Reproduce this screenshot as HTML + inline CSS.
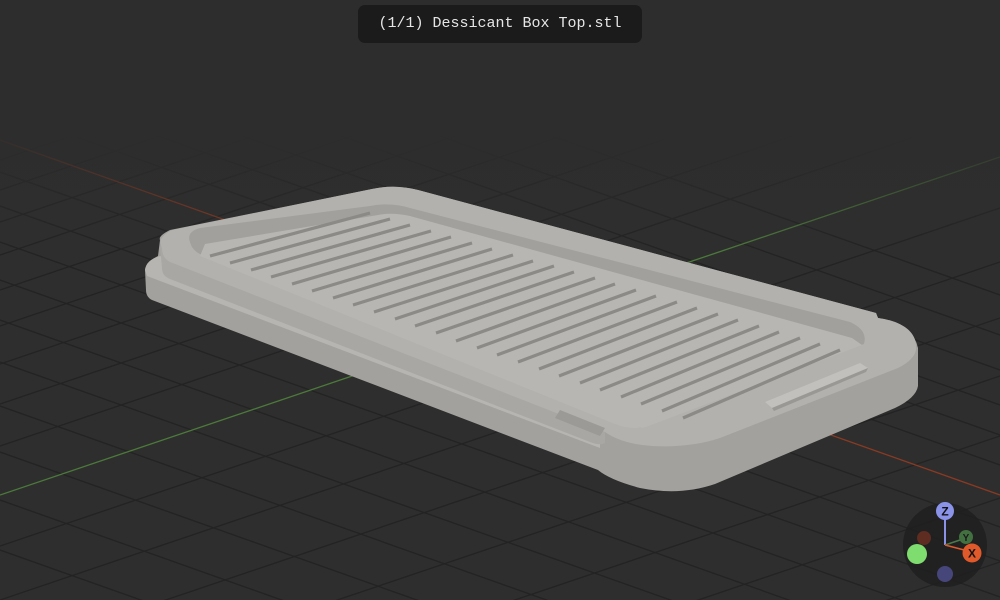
<!DOCTYPE html>
<html><head><meta charset="utf-8"><style>
html,body{margin:0;padding:0;width:1000px;height:600px;overflow:hidden;background:#2d2d2d}
.t{position:absolute;left:358px;top:5px;width:284px;height:38px;background:#1b1b1b;border-radius:7px;color:#e6e6e6;font:15px "Liberation Mono",monospace;line-height:38px;text-align:center}
svg{position:absolute;left:0;top:0}
</style></head><body>
<svg width="1000" height="600" viewBox="0 0 1000 600">
<defs>
<linearGradient id="fade" x1="0" y1="0" x2="0" y2="1">
<stop offset="0" stop-color="#2d2d2d" stop-opacity="1"/>
<stop offset="0.22" stop-color="#2d2d2d" stop-opacity="1"/>
<stop offset="0.42" stop-color="#2d2d2d" stop-opacity="0"/>
</linearGradient>
</defs>
<rect width="1000" height="600" fill="#2e2e2e"/>
<g stroke="#232323" stroke-width="1.3">
<line x1="0" y1="-60" x2="1000" y2="295"/><line x1="0" y1="-20" x2="1000" y2="335"/>
<line x1="0" y1="15" x2="1000" y2="370"/><line x1="0" y1="50" x2="1000" y2="405"/>
<line x1="0" y1="80" x2="1000" y2="435"/><line x1="0" y1="110" x2="1000" y2="465"/>
<line x1="0" y1="172" x2="1000" y2="527"/><line x1="0" y1="206" x2="1000" y2="561"/>
<line x1="0" y1="242" x2="1000" y2="597"/><line x1="0" y1="280" x2="1000" y2="635"/>
<line x1="0" y1="320" x2="1000" y2="675"/><line x1="0" y1="362" x2="1000" y2="717"/>
<line x1="0" y1="406" x2="1000" y2="761"/><line x1="0" y1="452" x2="1000" y2="807"/>
<line x1="0" y1="500" x2="1000" y2="855"/><line x1="0" y1="550" x2="1000" y2="905"/>
<line x1="0" y1="130" x2="1000" y2="-208"/><line x1="0" y1="160" x2="1000" y2="-178"/>
<line x1="0" y1="190" x2="1000" y2="-148"/><line x1="0" y1="222" x2="1000" y2="-116"/>
<line x1="0" y1="255" x2="1000" y2="-83"/><line x1="0" y1="290" x2="1000" y2="-48"/>
<line x1="0" y1="326" x2="1000" y2="-12"/><line x1="0" y1="364" x2="1000" y2="26"/>
<line x1="0" y1="404" x2="1000" y2="66"/><line x1="0" y1="446" x2="1000" y2="108"/>
<line x1="0" y1="546" x2="1000" y2="208"/><line x1="0" y1="600" x2="1000" y2="262"/>
<line x1="0" y1="656" x2="1000" y2="318"/><line x1="0" y1="714" x2="1000" y2="376"/>
<line x1="0" y1="774" x2="1000" y2="436"/><line x1="0" y1="836" x2="1000" y2="498"/>
<line x1="0" y1="900" x2="1000" y2="562"/><line x1="0" y1="966" x2="1000" y2="628"/>
<line x1="0" y1="1034" x2="1000" y2="696"/><line x1="0" y1="1104" x2="1000" y2="766"/>
</g>
<line x1="0" y1="140" x2="1000" y2="495" stroke="#8a3a22" stroke-width="1.3"/>
<line x1="0" y1="495" x2="1000" y2="157" stroke="#4c7a3a" stroke-width="1.3"/>
<rect width="1000" height="600" fill="url(#fade)"/>

<!-- model silhouette / sides -->
<path d="M160,240 Q158,236 170,230 L372,189 Q395,184 418,190 L876,313 L878,318 Q912,322 918,348 L918,386 Q916,398 895,408 L715,484 Q680,496 640,488 Q610,480 598,470 L152,300 Q146,297 146,290 L145,270 Q146,262 158,256 Z" fill="#a3a19d"/>
<!-- base ledge -->
<path d="M145,270 Q146,260 160,256 L600,425 L600,448 L147,276 Z" fill="#b7b5b1"/>
<!-- top slab side -->
<path d="M160,246 L605,420 L605,443 Q600,446 590,442 L170,279 Q162,276 162,268 Z" fill="#a9a7a3"/>
<!-- top face -->
<path d="M162,248 Q156,238 172,230 L372,189 Q395,184 418,190 L876,313 L878,318 Q918,324 916,350 Q914,360 898,368 L720,438 Q690,448 652,446 Q622,444 605,432 L170,262 Q162,258 162,248 Z" fill="#b3b1ad"/>
<!-- recess walls -->
<path d="M190,242 Q186,232 200,228 L370,206 Q390,202 410,208 L850,322 Q868,330 864,344 L640,428 L200,254 Q192,250 190,242 Z" fill="#a2a09c"/>
<!-- recess floor -->
<path d="M200,256 L205,244 L378,215 Q392,212 410,216 L852,338 L862,345 L646,427 Q630,430 615,424 Z" fill="#b8b6b2"/>
<!-- slats -->
<g stroke="#8c8a86" stroke-width="3.2" stroke-linecap="butt">
<line x1="210" y1="256" x2="370" y2="213"/>
<line x1="230" y1="263" x2="390" y2="219"/>
<line x1="251" y1="270" x2="410" y2="225"/>
<line x1="271" y1="277" x2="431" y2="231"/>
<line x1="292" y1="284" x2="451" y2="237"/>
<line x1="312" y1="291" x2="472" y2="243"/>
<line x1="333" y1="298" x2="492" y2="249"/>
<line x1="353" y1="305" x2="513" y2="255"/>
<line x1="374" y1="312" x2="533" y2="261"/>
<line x1="395" y1="319" x2="554" y2="266"/>
<line x1="415" y1="326" x2="574" y2="272"/>
<line x1="436" y1="333" x2="595" y2="278"/>
<line x1="456" y1="341" x2="615" y2="284"/>
<line x1="477" y1="348" x2="636" y2="290"/>
<line x1="497" y1="355" x2="656" y2="296"/>
<line x1="518" y1="362" x2="677" y2="302"/>
<line x1="539" y1="369" x2="697" y2="308"/>
<line x1="559" y1="376" x2="718" y2="314"/>
<line x1="580" y1="383" x2="738" y2="320"/>
<line x1="600" y1="390" x2="759" y2="326"/>
<line x1="621" y1="397" x2="779" y2="332"/>
<line x1="641" y1="404" x2="800" y2="338"/>
<line x1="662" y1="411" x2="820" y2="344"/>
<line x1="683" y1="418" x2="840" y2="350"/>
</g>
<!-- ridge -->
<path d="M765,402 L860,363 L868,368 L772,408 Z" fill="#c2c0bc"/>
<path d="M772,408 L868,368 L866,372 L774,411 Z" fill="#9a9894"/>
<!-- front groove -->
<path d="M560,410 L605,428 L600,436 L555,418 Z" fill="#9c9a96"/>

<!-- gizmo -->
<circle cx="945" cy="545" r="42" fill="#1f1f1f" fill-opacity="0.85"/>
<line x1="945" y1="545" x2="945" y2="515" stroke="#8a93e8" stroke-width="2"/>
<line x1="945" y1="545" x2="966" y2="538" stroke="#4a7a4a" stroke-width="1.5"/>
<line x1="945" y1="545" x2="968" y2="551" stroke="#e0592a" stroke-width="1.5"/>
<circle cx="924" cy="538" r="7" fill="#5e2c20"/>
<circle cx="917" cy="554" r="10" fill="#7fdc6e"/>
<circle cx="945" cy="574" r="8" fill="#46467a"/>
<circle cx="966" cy="537" r="7" fill="#427040"/>
<text x="966" y="541" font-family="Liberation Sans,sans-serif" font-size="10" font-weight="bold" fill="#1a1a1a" text-anchor="middle">Y</text>
<circle cx="945" cy="511" r="9" fill="#8a93e8"/>
<text x="945" y="515.5" font-family="Liberation Sans,sans-serif" font-size="12" font-weight="bold" fill="#111" text-anchor="middle">Z</text>
<circle cx="972" cy="553" r="9.5" fill="#e0592a"/>
<text x="972" y="557.5" font-family="Liberation Sans,sans-serif" font-size="12" font-weight="bold" fill="#111" text-anchor="middle">X</text>
</svg>
<div class="t">(1/1) Dessicant Box Top.stl</div>
</body></html>
